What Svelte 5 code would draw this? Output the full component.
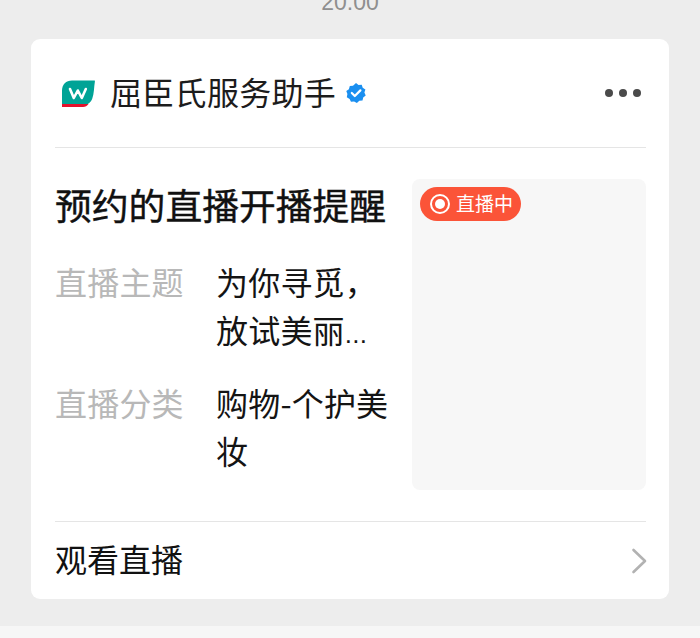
<script>
  const rows = [
    { label: '直播主题', lines: ['为你寻觅，', '放试美丽'], more: true },
    { label: '直播分类', lines: ['购物-个护美', '妆'], more: false }
  ];
</script>

<div class="page">
  <div class="time"><span>20:00</span></div>
  <div class="card">
    <header class="head">
      <svg class="logo" width="34" height="28" viewBox="0 0 34 28">
        <path d="M11 0.500H33.500C33.800 0.500 34 1 33.900 1.500C33 7 33 14 31.300 18.500C29.800 22.500 27 25 22 25H1V11C1 4.500 5 0.500 11 0.500Z" fill="#00a396"/>
        <path d="M1 24H27.500C26 25.800 24.500 27 22 27H1Z" fill="#e4112c"/>
        <path d="M9 9L12.800 18L16.800 10.500L20.800 18L24.800 9" fill="none" stroke="#fff" stroke-width="2.600" stroke-linecap="round" stroke-linejoin="round"/>
      </svg>
      <span class="name">屈臣氏服务助手</span>
      <svg class="badge" width="22" height="22" viewBox="0 0 22 22">
        <path d="M11 1L13.500 3L16.700 2.700L17.700 5.700L20.400 7.400L19.400 10.500L20.700 13.400L18.200 15.400L17.500 18.500L14.300 18.800L11.900 21L9.100 19.400L6 19.800L4.600 16.900L1.800 15.300L2.400 12.100L1.300 9.100L3.900 7.200L4.800 4.100L8 3.700Z" fill="#1a8ff0"/>
        <path d="M6.800 11L9.800 14L15.400 8.400" fill="none" stroke="#fff" stroke-width="2.200" stroke-linecap="round" stroke-linejoin="round"/>
      </svg>
      <div class="more"><i></i><i></i><i></i></div>
    </header>

    <section class="body">
      <div class="info">
        <h2>预约的直播开播提醒</h2>
        {#each rows as row}
          <div class="row">
            <div class="label">{row.label}</div>
            <div class="value">
              {#each row.lines as line, i}
                <div>{line}{#if row.more && i === row.lines.length - 1}<span class="ell">...</span>{/if}</div>
              {/each}
            </div>
          </div>
        {/each}
      </div>
      <div class="thumb">
        <div class="live">
          <span class="ring"><span class="dot"></span></span>
          <span class="live-text">直播中</span>
        </div>
      </div>
    </section>

    <footer class="foot">
      <span class="foot-text">观看直播</span>
      <svg width="16" height="26" viewBox="0 0 16 26">
        <path d="M2.500 2L14 13L2.500 24" fill="none" stroke="#b2b2b2" stroke-width="2.600" stroke-linecap="round" stroke-linejoin="round"/>
      </svg>
    </footer>
  </div>
  <div class="bottom"></div>
</div>

<style>
  :global(body) {
    margin: 0;
    background: #ededed;
  }
  .page {
    height: 638px;
    overflow: hidden;
    background: #ededed;
    font-family: "Noto Sans CJK SC", "Liberation Sans", sans-serif;
    display: flex;
    flex-direction: column;
  }
  .time {
    height: 39px;
    overflow: hidden;
    text-align: center;
    color: #8f8f8f;
    font-family: "Liberation Sans", sans-serif;
    font-size: 23px;
    line-height: 14px;
  }
  .time span {
    display: block;
    margin-top: -5px;
  }
  .card {
    margin: 0 31px;
    height: 560px;
    background: #fff;
    border-radius: 9px;
    padding: 0 23px 0 24px;
    box-sizing: border-box;
    display: flex;
    flex-direction: column;
    color: #111;
  }
  .head {
    height: 109px;
    box-sizing: border-box;
    border-bottom: 1px solid #e5e5e5;
    display: flex;
    align-items: center;
    padding: 0 5px 0 6px;
  }
  .logo {
    flex: none;
    margin-top: 1px;
  }
  .name {
    margin-left: 15px;
    font-size: 32px;
    letter-spacing: 0.3px;
    line-height: 44px;
    color: #1c1c1c;
    white-space: nowrap;
    margin-top: -4px;
  }
  .badge {
    margin-left: 9px;
    flex: none;
  }
  .more {
    margin-left: auto;
    display: flex;
    gap: 6px;
  }
  .more i {
    width: 8px;
    height: 8px;
    border-radius: 50%;
    background: #4a4a4a;
  }
  .body {
    display: flex;
    padding-top: 31px;
    height: 374px;
    box-sizing: border-box;
    border-bottom: 1px solid #e5e5e5;
  }
  .info {
    width: 357px;
    flex: none;
  }
  h2 {
    margin: 0 0 28px;
    font-size: 36.800px;
    line-height: 50px;
    font-weight: 400;
    -webkit-text-stroke: 0.4px #111;
    color: #111;
    white-space: nowrap;
  }
  .row {
    display: flex;
    margin-bottom: 20px;
    font-size: 32px;
    line-height: 48px;
    width: 335px;
  }
  .label {
    width: 161px;
    flex: none;
    color: #b8b8b8;
    letter-spacing: 0.2px;
  }
  .value {
    color: #141414;
    width: 174px;
    white-space: nowrap;
    letter-spacing: 0.2px;
  }
  .ell {
    font-family: "Liberation Sans", sans-serif;
    font-size: 26px;
  }
  .thumb {
    width: 234px;
    height: 311px;
    background: #f7f7f7;
    border-radius: 8px;
    padding: 8px 8px;
    box-sizing: border-box;
  }
  .live {
    display: inline-flex;
    align-items: center;
    height: 34px;
    padding: 0 8px 0 10px;
    border-radius: 17px;
    background: #fb5438;
    color: #fff;
    font-size: 19px;
    gap: 6px;
  }
  .live-text {
    margin-top: -4px;
  }
  .ring {
    width: 20px;
    height: 20px;
    box-sizing: border-box;
    border: 2px solid #fff;
    border-radius: 50%;
    display: flex;
    align-items: center;
    justify-content: center;
  }
  .dot {
    width: 10px;
    height: 10px;
    border-radius: 50%;
    background: #fff;
  }
  .foot {
    flex: 1;
    display: flex;
    align-items: center;
    justify-content: space-between;
    font-size: 32px;
    color: #111;
    padding-top: 1px;
  }
  .foot-text {
    margin-top: -6px;
  }
  .foot svg {
    margin-right: -1px;
  }
  .bottom {
    margin-top: 27px;
    flex: 1;
    background: #f6f6f6;
  }
</style>
